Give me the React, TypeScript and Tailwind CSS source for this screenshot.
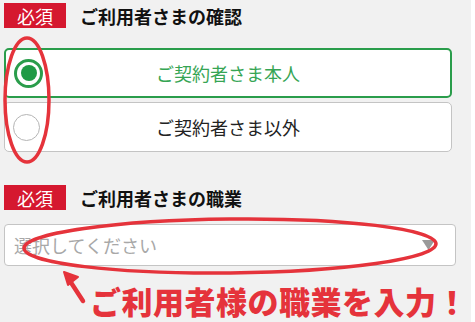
import React from 'react';

const FONT = '[font-family:"Noto_Sans_CJK_JP","Noto_Sans",sans-serif]';

function Badge() {
  return (
    <span className="flex h-[25px] w-[62px] items-center justify-center bg-[#d5182f] text-[18px] leading-none text-white">
      必須
    </span>
  );
}

function Heading({ title }: { title: string }) {
  return (
    <div className="flex items-center gap-[14px] pl-[4px]">
      <Badge />
      <span className="text-[18px] font-bold leading-none text-[#111]">{title}</span>
    </div>
  );
}

function Option({ label, checked }: { label: string; checked: boolean }) {
  return (
    <div
      className={
        checked
          ? 'relative flex h-[50px] items-center justify-center rounded-[5px] border-2 border-[#2a9d4b] bg-white'
          : 'relative flex h-[50px] items-center justify-center rounded-[5px] border border-[#c4c4c4] bg-white'
      }
    >
      {checked ? (
        <span className="absolute left-[8px] flex h-[29px] w-[29px] items-center justify-center rounded-full border-[3px] border-[#2a9d4b] bg-white">
          <span className="h-[16px] w-[16px] rounded-full bg-[#1f9a45]" />
        </span>
      ) : (
        <span className="absolute left-[8px] h-[27px] w-[27px] rounded-full border border-[#b5b5b5] bg-white" />
      )}
      <span className={checked ? 'text-[18px] text-[#36a554]' : 'text-[18px] text-[#222]'}>{label}</span>
    </div>
  );
}

export default function App() {
  return (
    <div className={`flex h-[322px] w-[475px] overflow-hidden bg-white ${FONT}`}>
      <div className="relative flex h-full w-[471px] flex-col bg-[#f1f1f1] pt-[3px]">
        <Heading title="ご利用者さまの確認" />

        <div className="mt-[20px] flex w-[452px] flex-col gap-[4px] pl-[4px]">
          <Option label="ご契約者さま本人" checked />
          <Option label="ご契約者さま以外" checked={false} />
        </div>

        <div className="mt-[33px]">
          <Heading title="ご利用者さまの職業" />
        </div>

        <div className="mt-[14px] pl-[4px]">
          <div className="relative flex h-[42px] w-[452px] items-center rounded-[4px] border border-[#c4c4c4] bg-white pl-[9px]">
            <span className="text-[18px] text-[#a8a8a8]">選択してください</span>
            <svg className="absolute right-[20px] top-[15px]" width="13" height="10" viewBox="0 0 13 10">
              <path d="M0 0 L13 0 L6.5 10 Z" fill="#9a9a9a" />
            </svg>
          </div>
        </div>

        <div className="mt-[19px] pl-[90px] text-[31px] font-black leading-none tracking-[0.5px] text-[#e5333b]">
          ご利用者様の職業を入力！
        </div>

        {/* annotation marks drawn over the form */}
        <svg className="pointer-events-none absolute left-0 top-0" width="471" height="322" viewBox="0 0 471 322">
          <ellipse cx="27" cy="100" rx="22" ry="62" fill="none" stroke="#e5333b" strokeWidth="3.5" />
          <ellipse cx="230" cy="246" rx="206" ry="27" fill="none" stroke="#e5333b" strokeWidth="3.5" transform="rotate(-0.6 230 246)" />
          <path d="M83 301 L70 281" stroke="#e5333b" strokeWidth="4.5" strokeLinecap="round" />
          <path d="M64 272 L78 277 L68 285 Z" fill="#e5333b" stroke="#e5333b" strokeWidth="2" strokeLinejoin="round" />
        </svg>
      </div>
    </div>
  );
}
